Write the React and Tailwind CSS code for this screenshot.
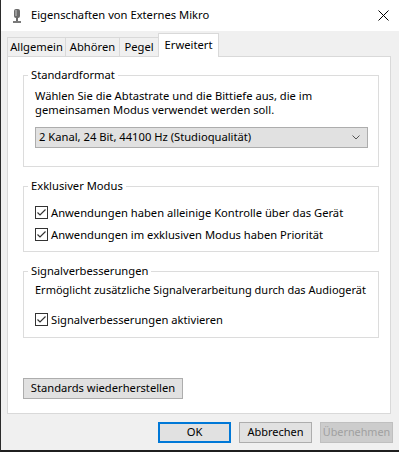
import { useState } from "react";

const font = { fontFamily: '"Noto Sans", "Liberation Sans", sans-serif' };

function Check({ checked, onChange, label }) {
    return (
        <label className="flex items-center h-[13px] cursor-default" onClick={onChange}>
            <span className="w-[13px] h-[13px] border border-[#333333] bg-white flex items-center justify-center shrink-0">
                {checked && (
                    <svg width="11" height="11" viewBox="0 0 11 11">
                        <path d="M1.5 5.5 L4 8 L9.5 2.5" stroke="#333333" strokeWidth="1.2" fill="none" />
                    </svg>
                )}
            </span>
            <span className="ml-[3px] text-[11.2px] text-black leading-none">{label}</span>
        </label>
    );
}

function Group({ title, className, children }) {
    return (
        <fieldset className={"border border-[#dcdcdc] w-[356px] ml-[15px] pl-[11px] " + className}>
            <legend className="-ml-[7px] px-[3px] text-[11.2px] leading-[14px] text-black">{title}</legend>
            {children}
        </fieldset>
    );
}

export default function App() {
    const [opts, setOpts] = useState({ exclusive: true, priority: true, enhance: true });
    const tabs = [
        { t: "Allgemein", w: "w-[59px]" },
        { t: "Abhören", w: "w-[55px]" },
        { t: "Pegel", w: "w-[40px]" },
    ];

    return (
        <div style={font} className="w-[399px] h-[452px] bg-[#f0f0f0] border-l border-[#2b2b2b] border-b-2 border-b-[#1f1f1f] flex flex-col overflow-hidden">
            {/* title bar */}
            <div className="h-[31px] bg-white flex items-center shrink-0">
                <svg className="ml-[11px]" width="10" height="16" viewBox="0 0 10 16">
                    <rect x="2" y="1" width="6" height="9" rx="2" fill="#6b6b6b" />
                    <rect x="3" y="2" width="2" height="6" fill="#9a9a9a" />
                    <rect x="4" y="10" width="2" height="3" fill="#6b6b6b" />
                    <rect x="1" y="13" width="8" height="2" fill="#7a7a7a" />
                </svg>
                <span className="ml-[9px] text-[11.2px] text-black">Eigenschaften von Externes Mikro</span>
                <svg className="ml-auto mr-[10px]" width="11" height="11" viewBox="0 0 11 11">
                    <path d="M0.5 0.5 L10.5 10.5 M10.5 0.5 L0.5 10.5" stroke="#000" strokeWidth="1" />
                </svg>
            </div>

            {/* tabs */}
            <div className="h-[25px] flex items-end pl-[6px] shrink-0">
                {tabs.map((tab, i) => (
                    <div key={tab.t} className={"h-[19px] border border-b-0 border-[#d9d9d9] flex items-center justify-center text-[11.2px] text-black " + (i > 0 ? "-ml-px " : "") + tab.w}>
                        {tab.t}
                    </div>
                ))}
                <div className="relative z-10 -ml-[1px] -mb-px h-[24px] w-[61px] bg-white border border-b-0 border-[#d9d9d9] flex items-start pt-[3px] justify-center text-[11.2px] text-black">
                    Erweitert
                </div>
            </div>

            {/* panel */}
            <div className="ml-[6px] w-[384px] h-[358px] bg-white border border-[#d9d9d9] pt-[11px] shrink-0">
                <Group title="Standardformat" className="h-[99px]">
                    <div className="text-[11.2px] leading-[14px] text-black mt-[7px]">
                        <div>Wählen Sie die Abtastrate und die Bittiefe aus, die im</div>
                        <div>gemeinsamen Modus verwendet werden soll.</div>
                    </div>
                    <div className="mt-[10px] w-[333px] h-[21px] bg-[#e1e1e1] border border-[#adadad] flex items-center pl-[3px] pr-[7px] text-[11.2px] text-black">
                        <span>2 Kanal, 24 Bit, 44100 Hz (Studioqualität)</span>
                        <svg className="ml-auto" width="8" height="5" viewBox="0 0 8 5">
                            <path d="M0.5 0.5 L4 4 L7.5 0.5" stroke="#555" strokeWidth="1" fill="none" />
                        </svg>
                    </div>
                </Group>

                <Group title="Exklusiver Modus" className="h-[73px] mt-[12px]">
                    <div className="mt-[13px] flex flex-col gap-[9px]">
                        <Check checked={opts.exclusive} onChange={() => setOpts({ ...opts, exclusive: !opts.exclusive })} label="Anwendungen haben alleinige Kontrolle über das Gerät" />
                        <Check checked={opts.priority} onChange={() => setOpts({ ...opts, priority: !opts.priority })} label="Anwendungen im exklusiven Modus haben Priorität" />
                    </div>
                </Group>

                <Group title="Signalverbesserungen" className="h-[74px] mt-[12px]">
                    <p className="text-[11px] leading-[13px] text-black mt-[5px]">Ermöglicht zusätzliche Signalverarbeitung durch das Audiogerät</p>
                    <div className="mt-[17px]">
                        <Check checked={opts.enhance} onChange={() => setOpts({ ...opts, enhance: !opts.enhance })} label="Signalverbesserungen aktivieren" />
                    </div>
                </Group>

                <button className="ml-[15px] mt-[40px] w-[160px] h-[21px] bg-[#e1e1e1] border border-[#adadad] text-[11.2px] text-black">
                    Standards wiederherstellen
                </button>
            </div>

            {/* footer */}
            <div className="flex justify-end gap-[8px] pr-[6px] mt-[8px]">
                <button className="w-[73px] h-[21px] bg-[#e1e1e1] border-2 border-[#0078d7] text-[11.2px] text-black">OK</button>
                <button className="w-[73px] h-[21px] bg-[#e1e1e1] border border-[#adadad] text-[11px] text-black">Abbrechen</button>
                <button className="w-[73px] h-[21px] bg-[#cccccc] border border-[#bfbfbf] text-[10.8px] text-[#a0a0a0]">Übernehmen</button>
            </div>
        </div>
    );
}
